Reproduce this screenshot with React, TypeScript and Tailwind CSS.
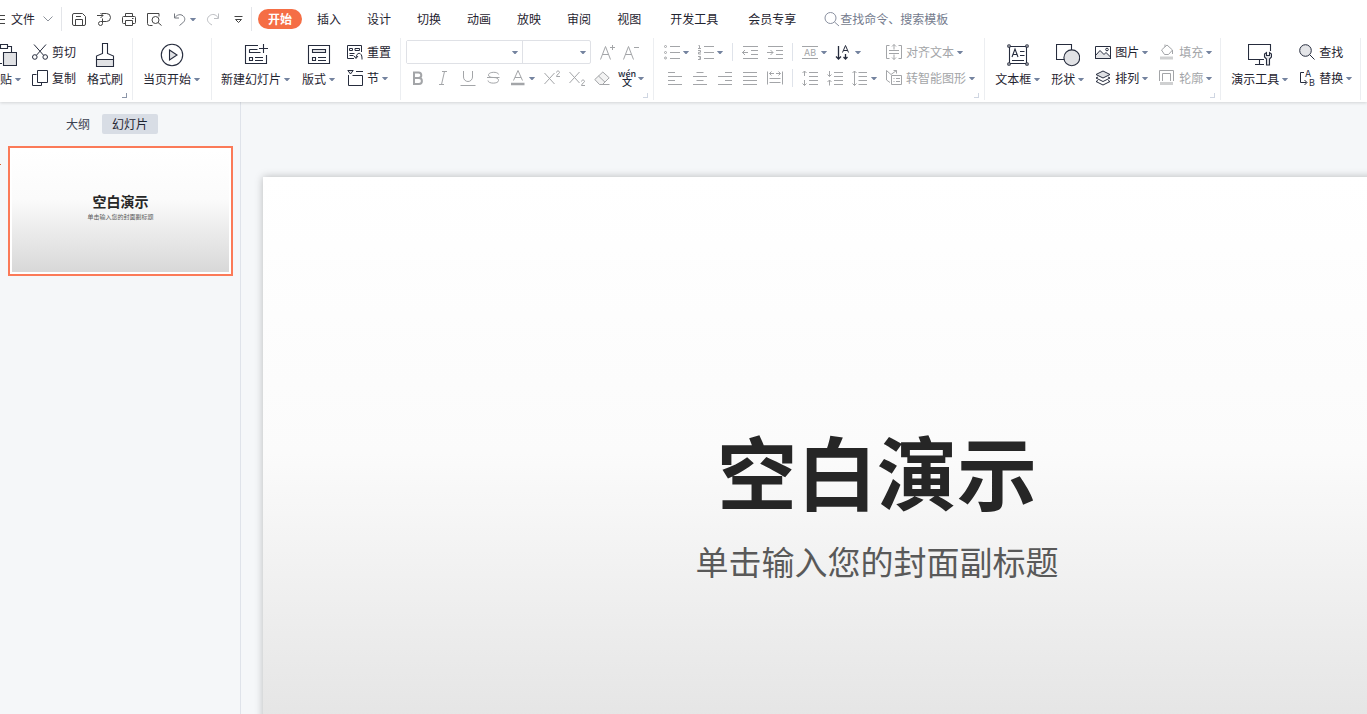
import React from "react";
import type { ReactNode } from "react";

type IconProps = { children: ReactNode };

function Icon({ children }: IconProps) {
  return (
    <svg className="size-4 shrink-0 overflow-visible" viewBox="0 0 16 16" fill="none" stroke="currentColor" strokeWidth="1" aria-hidden="true">
      {children}
    </svg>
  );
}

function BigIcon({ children }: IconProps) {
  return (
    <svg className="size-6 shrink-0" viewBox="0 0 24 24" fill="none" stroke="currentColor" strokeWidth="1.1" aria-hidden="true">
      {children}
    </svg>
  );
}

function Caret() {
  return (
    <svg className="h-[3px] w-1.5 shrink-0 text-[#74839f]" viewBox="0 0 6 3" fill="currentColor" aria-hidden="true">
      <path d="M.3 0h5.400v.6L3.500 3h-1L.3.6z" />
    </svg>
  );
}

const icons = {
  save: (
    <Icon>
      <path d="M3 2.500h8.500l3 3V13a1.500 1.500 0 0 1-1.500 1.500H3A1.500 1.500 0 0 1 1.500 13V4A1.500 1.500 0 0 1 3 2.500z" />
      <path d="M4.500 14.500v-6h7v6M5 5.500h5" />
    </Icon>
  ),
  exportPdf: (
    <Icon>
      <path d="M1 4.500h6M4.500 2l2.500 2.500L4.500 7" />
      <path d="M6 2.500h4.500a4 4 0 0 1 0 8H4.500a2 2 0 1 0 2 2V7.500" />
    </Icon>
  ),
  print: (
    <Icon>
      <path d="M4.500 5.500v-3h7v3M4.500 12.500h-2a1 1 0 0 1-1-1v-5a1 1 0 0 1 1-1h11a1 1 0 0 1 1 1v5a1 1 0 0 1-1 1h-2" />
      <path d="M4.500 9.500h7v5h-7zM11 7.500h1.500" />
    </Icon>
  ),
  preview: (
    <Icon>
      <path d="M6.500 14.500h-3a2 2 0 0 1-2-2v-10h11.500v3" />
      <circle cx="9.500" cy="9" r="3.500" />
      <path d="M12 11.500l3.500 3" />
    </Icon>
  ),
  undo: (
    <Icon>
      <path d="M3.500 2.500v4.500h4.500M3.700 6.800C6 3.500 9.500 2.800 12 4.800c2.600 2.200 2.200 5-.2 7L8.500 14.500" />
    </Icon>
  ),
  redo: (
    <Icon>
      <path d="M13.500 2.500v5H9M13.300 7C11 3 7 2.500 4.200 5c-2.600 2.400-2.200 5.200.5 7.500L7 14" />
    </Icon>
  ),
  more: (
    <Icon>
      <path d="M4.500 5.500h8M5.500 8.500l3 3 3-3z" />
    </Icon>
  ),
  cut: (
    <Icon>
      <circle cx="2.800" cy="13" r="2.300" />
      <circle cx="13.200" cy="13" r="2.300" />
      <path d="M2 .5l9.600 10.800M14 .5L4.400 11.300" />
    </Icon>
  ),
  copy: (
    <Icon>
      <path d="M4.500 4.500h-4v11h9v-3M5.500.5h10v12h-10z" />
    </Icon>
  ),
  reset: (
    <Icon>
      <path d="M7 14.500H.5v-13h14V8" />
      <path d="M2.500 4.500h3v2h-3zM8 4.500h4.500v2H8zM2.500 9.500h5M2.500 11.500h4M7 12l2 2.500 2-2.500M9 14c.5-6.500 6-6 6 0v1.500" />
    </Icon>
  ),
  section: (
    <Icon>
      <path fill="#dfe1e4" d="M.8.5h5.400l-2.700 3.500z" />
      <path d="M1.500 5v10.500h14v-10h-10M9 1.500h7" />
    </Icon>
  ),
  bold: (
    <Icon>
      <path strokeWidth="2" d="M4 2.500h4.500a2.800 2.800 0 0 1 0 5.600H4zM4 8.100h5a2.900 2.900 0 0 1 0 5.800H4z" />
    </Icon>
  ),
  italic: (
    <Icon>
      <path d="M7 1.500h5M4 14.500h5M9.500 1.500l-3 13" />
    </Icon>
  ),
  underline: (
    <Icon>
      <path d="M3.500 1v6a4.500 4.500 0 0 0 9 0V1M.5 15.500h15" />
    </Icon>
  ),
  strike: (
    <Icon>
      <path d="M13.500 4.500c0-3-10-3-10 .5 0 1.800 2 2.500 5 2.500M8.500 7.500c3 0 5 .8 5 3 0 3.500-10.500 3.500-10.500 0M2 7.500h12.500" />
    </Icon>
  ),
  fontColor: (
    <Icon>
      <path d="M3.500 10.500L8 .5l4.500 10M5 7.500h6" />
      <path strokeWidth="2.500" d="M1 14h13.500" />
    </Icon>
  ),
  superscript: (
    <Icon>
      <path d="M.5 3l10 11M10.500 3l-10 11M12.500 2.500c0-2 3-2 3 0 0 1.200-3 2-3 4h3.500" />
    </Icon>
  ),
  subscript: (
    <Icon>
      <path d="M.5 2l10 11M10.500 2l-10 11M12.500 11.500c0-2 3-2 3 0 0 1.200-3 2-3 4h3.500" />
    </Icon>
  ),
  eraser: (
    <Icon>
      <path fill="#f3f3f3" d="M.8 9.500l8-7.500 6.400 5.800L8.500 14.500h-3z" />
      <path d="M4.500 6l6.500 6.200M8 14.500h7.500" />
    </Icon>
  ),
  pinyin: (
    <span className="flex w-4 flex-col items-center font-medium whitespace-nowrap">
      <span className="text-[9px] leading-[8px]">wén</span>
      <span className="text-[10px] leading-[8px]">文</span>
    </span>
  ),
  growFont: (
    <Icon>
      <path d="M1.500 15.500l5-13 5 13M3.500 10.500h6M13.500 1v5M11 3.500h5" />
    </Icon>
  ),
  shrinkFont: (
    <Icon>
      <path d="M.5 15.500l5-13 5 13M2.500 10.500h6M11 3.500h5" />
    </Icon>
  ),
  bullets: (
    <Icon>
      <path d="M6 2.500h10M6 8.500h10M6 14.500h10" />
      <circle cx="1.500" cy="2.500" r="1" />
      <circle cx="1.500" cy="8.500" r="1" />
      <circle cx="1.500" cy="14" r="1" />
    </Icon>
  ),
  numbering: (
    <Icon>
      <path d="M6 2.500h10M6 8.500h10M6 14.500h10M.5 1.500h1v3M0 4.500h3M0 6.500h2.500v1.800h-2v1.700H3M0 12.500h2.500v3H0M1 14h1.500" />
    </Icon>
  ),
  outdent: (
    <Icon>
      <path d="M1 2.500h15M9 6.500h7M9 10.500h7M1 14.500h15M0 8.500h6M3 6L.5 8.500 3 11" />
    </Icon>
  ),
  indent: (
    <Icon>
      <path d="M1 2.500h15M9 6.500h7M9 10.500h7M1 14.500h15M0 8.500h6M3.500 6L6 8.500 3.500 11" />
    </Icon>
  ),
  direction: (
    <Icon>
      <path d="M0 2.500h16M0 14.500h16" />
      <text x="8" y="12" textAnchor="middle" fill="currentColor" stroke="none" className="font-['Inter',sans-serif] text-[9px]">AB</text>
    </Icon>
  ),
  sortText: (
    <Icon>
      <g strokeWidth="1.300">
        <path d="M2.500 2v13M0 12.500L2.500 15 5 12.500M9.500 10v5M7.500 13l2 2 2-2" />
      </g>
      <path d="M6.500 8.500l3-7 3 7M7.500 6.500h4" />
    </Icon>
  ),
  alignLeft: (
    <Icon>
      <path d="M1 2.500h7M1 6.500h14M1 10.500h7M1 14.500h14" />
    </Icon>
  ),
  alignCenter: (
    <Icon>
      <path d="M4.500 2.500h7M1 6.500h14M4.500 10.500h7M1 14.500h14" />
    </Icon>
  ),
  alignRight: (
    <Icon>
      <path d="M8 2.500h7M1 6.500h14M8 10.500h7M1 14.500h14" />
    </Icon>
  ),
  justify: (
    <Icon>
      <path d="M1 2.500h14M1 6.500h14M1 10.500h14M1 14.500h14" />
    </Icon>
  ),
  distribute: (
    <Icon>
      <path d="M.5 1.500v13M15.500 1.500v13M2.500 3.500h4.500M9 3.500h4.500M4.500 1.500l-2 2 2 2M11.500 1.500l2 2-2 2M2.500 8.500h11M2.500 12.500h11" />
    </Icon>
  ),
  spaceOut: (
    <Icon>
      <path d="M7 2.500h9M7 6.500h9M7 10.500h9M7 14.500h9M2.500 1v5M.5 3l2-2 2 2M2.500 10v5.500M.5 13.500l2 2 2-2" />
    </Icon>
  ),
  spaceIn: (
    <Icon>
      <path d="M7 2.500h9M7 6.500h9M7 10.500h9M7 14.500h9M2.500 1v5.500M.5 4.500l2 2 2-2M2.500 10v5.500M.5 12l2-2 2 2" />
    </Icon>
  ),
  lineSpacing: (
    <Icon>
      <path d="M6.500 2.500H15M6.500 6.500H15M6.500 10.500H15M6.500 14.500H15M2.500 1v14.500M.5 3l2-2 2 2M.5 13.500l2 2 2-2" />
    </Icon>
  ),
  alignText: (
    <Icon>
      <path d="M3.500 1.500H.5v13h3M12.500 1.500h3v13h-3M3 6.500h10M3 9.500h10M8 .5v5M6 2.500l2-2 2 2M8 10.500v5M6 13.500l2 2 2-2" />
    </Icon>
  ),
  smartArt: (
    <Icon>
      <path d="M4 12.500L.5 10V.5L5 4.500 10.500.5v3M10.500.5h-3M5.500 5.500h10v9h-10zM7.500 8.500h1M10 8.500h4M7.500 11.500h1M10 11.500h4" />
    </Icon>
  ),
  picture: (
    <Icon>
      <path fill="#e4e5e8" d="M.5 11.500l4.500-5 4 4 2-2 4.500 4.500v1.500H.5z" />
      <path d="M.5 2.500h15v12H.5z" />
      <circle cx="12" cy="5.500" r="1.300" />
    </Icon>
  ),
  arrange: (
    <Icon>
      <path fill="#dfe1e4" d="M8 1l7 3.500L8 8 1 4.500z" />
      <path d="M3 7L1 8l7 3.500L15 8l-2-1M3 10.500l-2 1L8 15l7-3.500-2-1" />
    </Icon>
  ),
  fill: (
    <Icon>
      <path d="M2.500 6l5.500-5 5.500 5-4 4.500h-4zM6 3V.5M13.500 6v4" />
      <path stroke="#cfd0d1" strokeWidth="3" d="M1 14h13" />
    </Icon>
  ),
  outline: (
    <Icon>
      <path d="M.5 11V.5h14V11M3.500 11V3.500h8V11" />
      <path stroke="#cfd0d1" strokeWidth="3" d="M1 13.500h13" />
    </Icon>
  ),
  find: (
    <Icon>
      <circle cx="6.500" cy="6.500" r="5.800" fill="#e4e5e8" />
      <path d="M10.700 10.700L15.500 15.500" />
    </Icon>
  ),
  replace: (
    <Icon>
      <path d="M5 2.500H1.500v10h6M5.500 10l2.500 2.500L5.500 15" />
      <g fill="currentColor" stroke="none" className="font-['Inter',sans-serif] text-[9px]">
        <text x="6" y="7">A</text>
        <text x="10" y="16">B</text>
      </g>
    </Icon>
  ),
  search: (
    <Icon>
      <circle cx="6.500" cy="7" r="5.500" />
      <path d="M10.500 11l4.500 4" />
    </Icon>
  ),
};

const bigIcons = {
  paste: (
    <BigIcon>
      <path d="M9 20.500H.5v-17h7M14 3.500h4.500V9M7.500 1.500h7v4h-7z" />
      <path fill="#e1e2e5" d="M10.500 9.500h13v13h-13z" />
    </BigIcon>
  ),
  brush: (
    <BigIcon>
      <path fill="#e1e2e5" d="M3.500 16.500h17v7h-17z" />
      <path d="M9.500.5h5v10l6 2.500v3.500h-17V13l6-2.500z" />
    </BigIcon>
  ),
  play: (
    <BigIcon>
      <circle cx="12" cy="12" r="10.700" />
      <path fill="#e1e2e5" d="M9.500 7l7.500 5-7.500 5z" />
    </BigIcon>
  ),
  newSlide: (
    <BigIcon>
      <path d="M14 2.500H1.500v18h21V12M15 5.500h9M19.500 1v9M5.500 6.500h8M5.500 6.500v3h11M5.500 14.500h3v3h-3zM11 14.500h8M11 17.500h8" />
    </BigIcon>
  ),
  layout: (
    <BigIcon>
      <path d="M1.500 2.500h21v18h-21zM5.500 14.500h3v3h-3zM11 14.500h8M11 17.500h8" />
      <path fill="#e1e2e5" d="M5.500 6.500h13v3h-13z" />
    </BigIcon>
  ),
  textBox: (
    <BigIcon>
      <path d="M3.500 3.500h17v17h-17zM6 14l3-8 3 8M7 11.500h4M14 8.500h4.500M14 12.500h4.500M6 17.500h12" />
      <g fill="#fff">
        <circle cx="3" cy="3" r="1.300" />
        <circle cx="21" cy="3" r="1.300" />
        <circle cx="3" cy="21" r="1.300" />
        <circle cx="21" cy="21" r="1.300" />
      </g>
    </BigIcon>
  ),
  shapes: (
    <BigIcon>
      <path d="M.5 1.500h15v15H.5z" />
      <circle cx="15.800" cy="14.800" r="7.900" fill="#e1e2e5" />
    </BigIcon>
  ),
  tools: (
    <BigIcon>
      <path d="M16 16.500H.5v-15h22V8M11.500 17v4M7 21.500h9" />
      <path fill="#e1e2e5" d="M18.500 9.500v3h3v-3l2 1.500v3l-2 2v6h-3v-6l-2-2v-3z" />
    </BigIcon>
  ),
};

const ink = "text-[#262c3d]";
const faded = "text-[#a3a5a8]";

function IconButton({ label, icon, caret, dark }: { label: string; icon: ReactNode; caret?: boolean; dark?: boolean }) {
  return (
    <button type="button" aria-label={label} className={`flex h-[26px] shrink-0 items-center gap-[3px] ${dark ? ink : faded}`}>
      {icon}
      {caret && <Caret />}
    </button>
  );
}

function RowButton({ label, icon, caret, dim }: { label: string; icon: ReactNode; caret?: boolean; dim?: boolean }) {
  return (
    <button type="button" className={`flex h-[26px] shrink-0 items-center whitespace-nowrap ${dim ? faded : ink}`}>
      {icon}
      <span className={`ml-1 ${dim ? "text-[#a3a5a8]" : "text-[#1f2430]"}`}>{label}</span>
      {caret && <span className="ml-[3px] flex"><Caret /></span>}
    </button>
  );
}

function BigButton({ label, icon, caret, shift }: { label: string; icon: ReactNode; caret?: boolean; shift?: boolean }) {
  return (
    <button type="button" className={`flex shrink-0 flex-col items-center pt-1 whitespace-nowrap ${ink} ${shift ? "-ml-3" : ""}`}>
      {icon}
      <span className="flex h-6 items-center gap-[3px] text-[#1f2430]">
        {label}
        {caret && <Caret />}
      </span>
    </button>
  );
}

function Group({ children, className, launcher }: { children: ReactNode; className: string; launcher?: "dark" | "light" }) {
  return (
    <div className={`relative flex h-[62px] shrink-0 items-start border-r border-[#eceef1] pt-px ${className}`}>
      {children}
      {launcher && (
        <button
          type="button"
          aria-label="更多设置"
          className={`absolute right-[5px] bottom-0.5 size-[5px] border-r border-b ${launcher === "dark" ? "border-[#8b95a8]" : "border-[#cfd6e2]"}`}
        />
      )}
    </div>
  );
}

function Combo({ label, className }: { label: string; className: string }) {
  return (
    <label className={`flex h-[22px] items-center pr-1 ${className}`}>
      <select aria-label={label} className="h-full min-w-0 flex-1 appearance-none bg-white outline-none" />
      <Caret />
    </label>
  );
}

function Divider() {
  return <span className="h-[18px] w-px shrink-0 bg-[#dfe3ea]" />;
}

const tabs = ["插入", "设计", "切换", "动画", "放映", "审阅", "视图"];

function MenuBar() {
  return (
    <div className="flex h-[38px] items-center">
      <button type="button" className="-ml-1 flex items-center text-[#1f2430]">
        <svg className="size-[9px]" viewBox="0 0 9 9" stroke="#444" aria-hidden="true">
          <path d="M0 .5h9M0 4.500h9M0 8.500h9" />
        </svg>
        <span className="ml-1.5">文件</span>
        <svg className="ml-2 h-1.5 w-2.5" viewBox="0 0 10 6" fill="none" stroke="#8d929b" aria-hidden="true">
          <path d="M.5.5L5 5 9.500.5" />
        </svg>
      </button>
      <span className="ml-2 h-6 w-px bg-[#e3e5e9]" />
      <div className="flex items-center gap-[9px] px-[9px] text-[#444]">
        <button type="button" aria-label="保存">{icons.save}</button>
        <button type="button" aria-label="输出为PDF">{icons.exportPdf}</button>
        <button type="button" aria-label="打印">{icons.print}</button>
        <button type="button" aria-label="打印预览">{icons.preview}</button>
        <button type="button" aria-label="撤销" className="flex items-center gap-[3px] text-[#74787f]">{icons.undo}<Caret /></button>
        <button type="button" aria-label="恢复" className="text-[#bcbec2]">{icons.redo}</button>
        <button type="button" aria-label="自定义快速访问工具栏">{icons.more}</button>
      </div>
      <span className="-ml-1 h-6 w-px bg-[#e3e5e9]" />
      <nav className="flex items-center whitespace-nowrap text-[#1f2430]">
        <button type="button" className="mr-0.5 ml-1.5 h-5 rounded-full bg-[#f56e45] px-2.5 font-bold text-white">开始</button>
        {tabs.map((t) => (
          <button type="button" key={t} className="px-[13px]">{t}</button>
        ))}
        <button type="button" className="px-4">开发工具</button>
        <button type="button" className="px-3.5">会员专享</button>
      </nav>
      <label className="ml-3.5 flex flex-1 items-center text-[#8a90a0]">
        {icons.search}
        <input
          type="text"
          aria-label="搜索"
          placeholder="查找命令、搜索模板"
          className="min-w-0 flex-1 bg-transparent outline-none placeholder:text-[#747b8d]"
        />
      </label>
    </div>
  );
}

function Ribbon() {
  return (
    <div className="flex h-16 items-start">
      <Group className="gap-[11px] pr-[9px]" launcher="dark">
        <BigButton shift label="粘贴" icon={bigIcons.paste} caret />
        <div className="flex flex-col">
          <RowButton label="剪切" icon={icons.cut} />
          <RowButton label="复制" icon={icons.copy} />
        </div>
        <BigButton label="格式刷" icon={bigIcons.brush} />
      </Group>
      <Group className="pr-[11px] pl-2.5">
        <BigButton label="当页开始" icon={bigIcons.play} caret />
      </Group>
      <Group className="gap-3 px-[9px]">
        <BigButton label="新建幻灯片" icon={bigIcons.newSlide} caret />
        <BigButton label="版式" icon={bigIcons.layout} caret />
        <div className="flex flex-col items-start">
          <RowButton label="重置" icon={icons.reset} />
          <RowButton label="节" icon={icons.section} caret />
        </div>
      </Group>
      <Group className="px-[9px]" launcher="light">
        <div className="flex flex-col">
          <div className="-ml-1 flex h-[26px] items-center gap-2">
            <div className="flex rounded-xs border border-[#dfe1e6]">
              <Combo label="字体" className="w-[115px]" />
              <Combo label="字号" className="w-[68px] border-l border-[#dfe1e6]" />
            </div>
            <IconButton label="增大字号" icon={icons.growFont} />
            <IconButton label="减小字号" icon={icons.shrinkFont} />
          </div>
          <div className="flex gap-[9px]">
            <IconButton label="加粗" icon={icons.bold} />
            <IconButton label="倾斜" icon={icons.italic} />
            <IconButton label="下划线" icon={icons.underline} />
            <IconButton label="删除线" icon={icons.strike} />
            <IconButton label="字体颜色" icon={icons.fontColor} caret />
            <IconButton label="上标" icon={icons.superscript} />
            <IconButton label="下标" icon={icons.subscript} />
            <IconButton label="清除格式" icon={icons.eraser} />
            <IconButton label="拼音指南" icon={icons.pinyin} caret dark />
          </div>
        </div>
      </Group>
      <Group className="gap-[9px] pr-[9px] pl-2.5" launcher="light">
        <div className="flex flex-col items-end">
          <div className="flex items-center gap-[9px]">
            <IconButton label="项目符号" icon={icons.bullets} caret />
            <IconButton label="编号" icon={icons.numbering} caret />
            <Divider />
            <IconButton label="减少缩进量" icon={icons.outdent} />
            <IconButton label="增加缩进量" icon={icons.indent} />
          </div>
          <div className="flex gap-[9px]">
            <IconButton label="左对齐" icon={icons.alignLeft} />
            <IconButton label="居中对齐" icon={icons.alignCenter} />
            <IconButton label="右对齐" icon={icons.alignRight} />
            <IconButton label="两端对齐" icon={icons.justify} />
            <IconButton label="分散对齐" icon={icons.distribute} />
          </div>
        </div>
        <div className="flex flex-col">
          <div className="flex items-center gap-[9px]">
            <Divider />
            <IconButton label="文字方向" icon={icons.direction} caret />
            <IconButton label="文字排列" icon={icons.sortText} caret dark />
          </div>
          <div className="flex items-center gap-[9px]">
            <Divider />
            <IconButton label="增大段落间距" icon={icons.spaceOut} />
            <IconButton label="减小段落间距" icon={icons.spaceIn} />
            <IconButton label="行距" icon={icons.lineSpacing} caret />
          </div>
        </div>
        <div className="flex flex-col items-start">
          <RowButton label="对齐文本" icon={icons.alignText} caret dim />
          <RowButton label="转智能图形" icon={icons.smartArt} caret dim />
        </div>
      </Group>
      <Group className="gap-[11px] pr-2 pl-2.5" launcher="light">
        <BigButton label="文本框" icon={bigIcons.textBox} caret />
        <BigButton label="形状" icon={bigIcons.shapes} caret />
        <div className="flex flex-col">
          <RowButton label="图片" icon={icons.picture} caret />
          <RowButton label="排列" icon={icons.arrange} caret />
        </div>
        <div className="flex flex-col">
          <RowButton label="填充" icon={icons.fill} caret dim />
          <RowButton label="轮廓" icon={icons.outline} caret dim />
        </div>
      </Group>
      <Group className="gap-[11px] pr-2 pl-2.5">
        <BigButton label="演示工具" icon={bigIcons.tools} caret />
        <div className="flex flex-col items-start">
          <RowButton label="查找" icon={icons.find} />
          <RowButton label="替换" icon={icons.replace} caret />
        </div>
      </Group>
    </div>
  );
}

function SlidePanel() {
  return (
    <aside className="w-[241px] shrink-0 border-r border-[#dfe3ea] px-2 pt-3">
      <div className="flex h-5 items-center pl-[46px] text-[#3c4252]">
        <button type="button" className="px-3">大纲</button>
        <button type="button" className="h-5 rounded-xs bg-[#d8dde5] px-2.5 text-[#1f2430]">幻灯片</button>
      </div>
      <div className="relative mt-3 mr-[-1px]">
        <span className="absolute top-[18px] -left-2 h-px w-px bg-[#d9622f]" />
        <button type="button" className="block w-full border-2 border-[#fb7a58] bg-white p-0.5">
          <span className="flex aspect-[217/122] flex-col items-center justify-center bg-linear-to-b from-white via-[#fbfbfb] via-40% to-[#d8d8d8] pb-2 whitespace-nowrap">
            <span className="text-[14px] leading-5 font-bold text-[#262626]">空白演示</span>
            <span className="text-[6px] leading-3 text-[#595959]">单击输入您的封面副标题</span>
          </span>
        </button>
      </div>
    </aside>
  );
}

function Canvas() {
  return (
    <main className="min-w-0 flex-1 overflow-hidden pt-[75px] pl-[22px]">
      <section className="flex aspect-video w-[1228px] flex-col items-center bg-linear-to-b from-white via-[#fbfbfb] via-40% to-[#d9d9d9] pt-[244px] whitespace-nowrap shadow-[0_0_8px_rgba(0,0,0,0.25)]">
        <h1 className="text-[80px] leading-24 font-bold text-[#262626]">空白演示</h1>
        <p className="mt-5 text-[33px] leading-12 text-[#595959]">单击输入您的封面副标题</p>
      </section>
    </main>
  );
}

export default function App() {
  return (
    <div className="flex h-screen flex-col overflow-hidden bg-[#f5f7f9] font-['Noto_Sans_CJK_SC',sans-serif] text-xs">
      <header className="relative shrink-0 overflow-x-clip bg-white shadow-[0_1px_3px_rgba(0,0,0,0.14)]">
        <MenuBar />
        <Ribbon />
      </header>
      <div className="flex min-h-0 flex-1">
        <SlidePanel />
        <Canvas />
      </div>
    </div>
  );
}
